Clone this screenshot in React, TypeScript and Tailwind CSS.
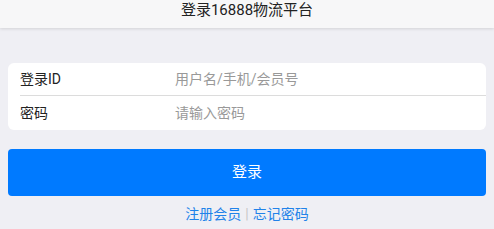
import React from 'react';

const font = { fontFamily: 'Roboto, "Noto Sans CJK SC", sans-serif' };

export default function App() {
  return (
    <div className="min-h-[229px] w-full bg-[#efeff4]" style={font}>
      {/* Header */}
      <div className="h-[28px] bg-[#f7f7f8] shadow-[0_1px_3px_rgba(0,0,0,0.12)] flex items-center justify-center">
        <span className="text-[15px] leading-none text-[#222] -mt-[8px]">登录16888物流平台</span>
      </div>

      {/* Form card */}
      <div className="mx-2 mt-[35px] rounded-[6px] bg-white">
        <div className="ml-3 flex h-[33px] items-center border-b border-[#dcdcdc]">
          <span className="w-[155px] text-[14px] text-[#222]">登录ID</span>
          <span className="text-[14px] text-[#999]">用户名/手机/会员号</span>
        </div>
        <div className="ml-3 flex h-[34px] items-center">
          <span className="w-[155px] text-[14px] text-[#222]">密码</span>
          <span className="text-[14px] text-[#999]">请输入密码</span>
        </div>
      </div>

      {/* Submit */}
      <button className="mx-2 mt-[19px] flex h-[47px] w-[478px] items-center justify-center rounded-[4px] bg-[#007aff] text-[15px] text-white">
        登录
      </button>

      {/* Links */}
      <div className="mt-[8px] flex items-center justify-center text-[14px]">
        <span className="text-[#2182e9]">注册会员</span>
        <span className="mx-[4px] text-[#c8c8c8]">|</span>
        <span className="text-[#2182e9]">忘记密码</span>
      </div>
    </div>
  );
}
